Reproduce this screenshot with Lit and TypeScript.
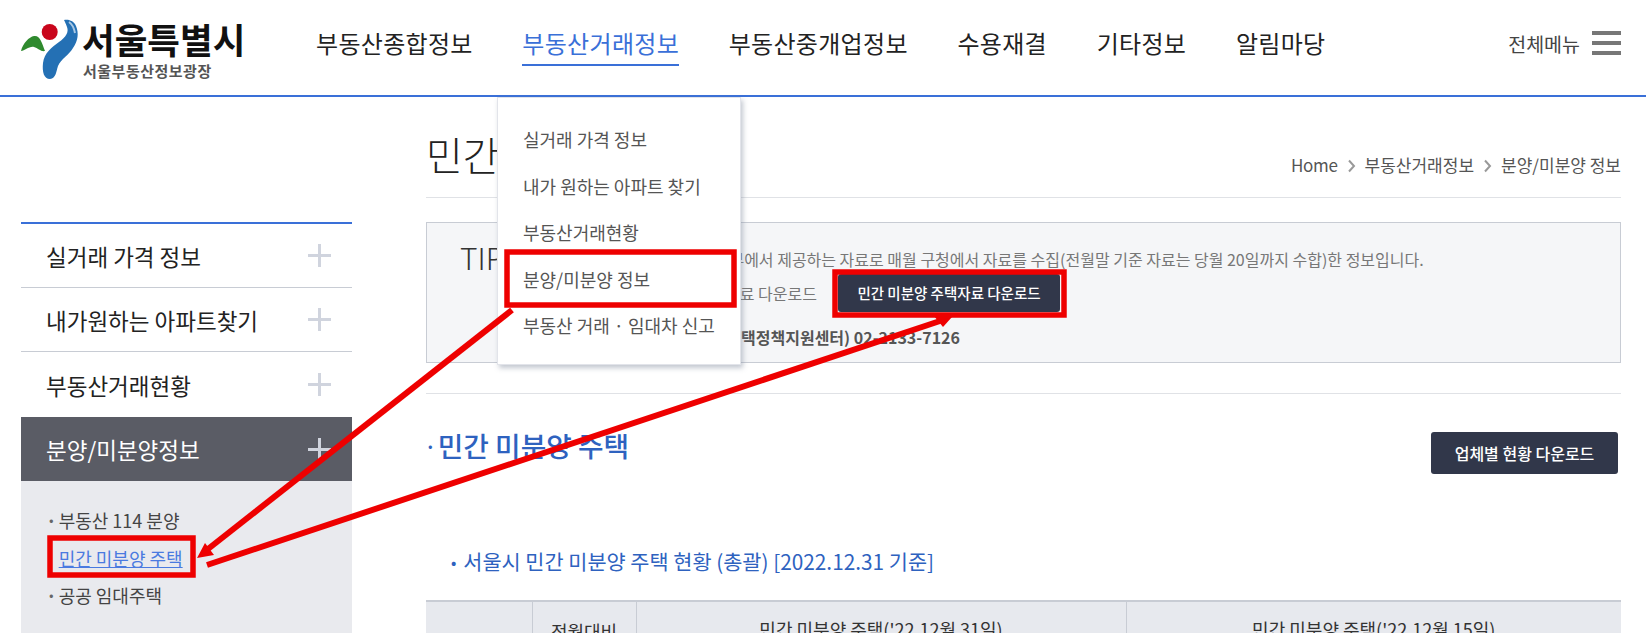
import { LitElement, html, css, svg } from 'lit';
import { customElement } from 'lit/decorators.js';

const NAV = ['부동산종합정보', '부동산거래정보', '부동산중개업정보', '수용재결', '기타정보', '알림마당'];
const DROPDOWN = ['실거래 가격 정보', '내가 원하는 아파트 찾기', '부동산거래현황', '분양/미분양 정보', '부동산 거래 · 임대차 신고'];
const SIDE = ['실거래 가격 정보', '내가원하는 아파트찾기', '부동산거래현황'];

@customElement('app-root')
export class AppRoot extends LitElement {
  static styles = css`
    :host {
      display: block;
      position: relative;
      height: 633px;
      overflow: hidden;
      background: #fff;
      color: #222;
      font-family: 'Noto Sans CJK KR', 'Noto Sans', sans-serif;
    }
    .header {
      display: flex;
      align-items: center;
      height: 95px;
      border-bottom: 2px solid #3a70d8;
      padding: 0 25px 0 19px;
    }
    .logo {
      display: flex;
      width: 297px;
      flex: none;
    }
    .logo svg {
      flex: none;
      margin-top: -2px;
    }
    .logo-text {
      display: flex;
      flex-direction: column;
      margin: 6px 0 0 -1px;
    }
    .logo-main {
      font-size: 35.5px;
      font-weight: 700;
      line-height: 40px;
      color: #111;
    }
    .logo-sub {
      font-size: 15px;
      font-weight: 700;
      line-height: 20px;
      color: #555;
      margin: 2px 0 0 1px;
      letter-spacing: 0.5px;
    }
    .nav {
      display: flex;
      gap: 49.7px;
      flex: 1;
      margin-bottom: 8px;
    }
    .nav a {
      font-size: 24px;
      line-height: 38px;
      letter-spacing: 0.3px;
      color: #222;
      padding-bottom: 2px;
      border-bottom: 2px solid transparent;
      margin-bottom: -2px;
    }
    .nav a.on {
      color: #3a70d8;
      border-bottom-color: #3a70d8;
    }
    .all {
      display: flex;
      align-items: center;
      gap: 12px;
      font-size: 19.5px;
      color: #444;
      margin-bottom: 9px;
    }
    .burger {
      display: flex;
      flex-direction: column;
      gap: 6px;
      width: 29px;
    }
    .burger i {
      display: block;
      height: 4px;
      background: #777;
    }
    .body {
      display: flex;
      gap: 74px;
      padding-left: 21px;
    }
    .side {
      flex: none;
      width: 331px;
      margin-top: 125px;
      border-top: 2px solid #3a70d8;
    }
    .side-row {
      display: flex;
      align-items: center;
      justify-content: space-between;
      height: 63px;
      padding: 0 21px 0 25px;
      border-bottom: 1px solid #c8ccd4;
      font-size: 22.5px;
      color: #222;
    }
    .side-row:nth-child(3) {
      border-bottom: 0;
      height: 65px;
    }
    .side-row.on {
      height: 64px;
      background: #5a5c65;
      color: #fff;
      border-bottom: 0;
    }
    .plus {
      width: 23px;
      height: 23px;
      flex: none;
      background:
        linear-gradient(#d0d4de, #d0d4de) center / 100% 3px no-repeat,
        linear-gradient(#d0d4de, #d0d4de) center / 3px 100% no-repeat;
    }
    .sub {
      background: #e9eaee;
      padding: 21px 25px 40px 25px;
      height: 152px;
      font-size: 18px;
      color: #444;
    }
    .sub div {
      height: 37.5px;
      line-height: 37.5px;
    }
    .sub div::before {
      content: '·';
      font-weight: 700;
      color: #666;
      margin-right: 2px;
    }
    .sub a {
      color: #4a7ae0;
      text-decoration: underline;
    }
    .sub .link::before {
      color: transparent;
    }
    .main {
      flex: 1;
      min-width: 0;
      padding-right: 25px;
    }
    .title-row {
      display: flex;
      align-items: flex-end;
      justify-content: space-between;
      height: 101px;
      border-bottom: 1px solid #e0e2e6;
      box-sizing: border-box;
    }
    .title {
      font-size: 40px;
      font-weight: 300;
      line-height: 58px;
      margin: 0 0 14px 0;
      color: #222;
    }
    .crumbs {
      display: flex;
      align-items: center;
      gap: 9px;
      font-size: 17px;
      line-height: 24px;
      margin-bottom: 20px;
      color: #555;
    }
    .crumbs span:first-child {
      letter-spacing: -0.3px;
    }
    .crumbs svg {
      flex: none;
      margin-top: 2px;
    }
    .tip {
      display: flex;
      box-sizing: border-box;
      margin-top: 24px;
      background: #f5f6f8;
      border: 1px solid #c8ccd4;
      padding: 19px 0 0 33px;
      height: 141px;
    }
    .tip-label {
      font-size: 30px;
      font-weight: 300;
      line-height: 30px;
      color: #333;
      width: 49px;
      flex: none;
    }
    .tip-body {
      flex: 1;
      font-size: 16px;
      color: #777;
      padding-top: 5px;
      white-space: nowrap;
    }
    .tip-line {
      display: flex;
      align-items: center;
      line-height: 24px;
    }
    .tip-line.dl {
      height: 38px;
      margin-top: 3px;
      gap: 21px;
    }
    .tip-line.dl span:first-child {
      flex: none;
      width: 308px;
      text-align: right;
    }
    .tip-line.strong {
      width: 451px;
      justify-content: flex-end;
      font-weight: 700;
      color: #555;
      margin-top: 13px;
    }
    .btn {
      display: flex;
      align-items: center;
      justify-content: center;
      background: #31374a;
      color: #fff;
      border-radius: 3px;
      font-weight: 500;
    }
    .btn.small {
      flex: none;
      width: 222px;
      height: 38px;
      font-size: 14.5px;
    }
    .btn.big {
      width: 187px;
      height: 42px;
      font-size: 16px;
      margin-right: 3px;
    }
    .rule {
      border-top: 1px solid #e0e2e6;
      margin-top: 30px;
    }
    .section {
      display: flex;
      align-items: center;
      justify-content: space-between;
      margin-top: 38px;
      height: 42px;
    }
    .section h2 {
      margin: 0 0 15px -1px;
      font-size: 27.8px;
      font-weight: 500;
      color: #2e62bf;
      line-height: 42px;
    }
    .section h2 b {
      font-size: 18px;
      margin-right: 2px;
      vertical-align: 3px;
    }
    .table-title {
      margin: 72px 0 0 25px;
      font-size: 20.8px;
      line-height: 30px;
      font-weight: 400;
      color: #2e62bf;
    }
    .table-title b {
      font-size: 14px;
      margin-right: 7px;
      vertical-align: 2px;
    }
    table {
      width: 100%;
      margin-top: 23px;
      border-collapse: collapse;
      table-layout: fixed;
      border-top: 2px solid #c8ccd4;
      background: #e7e9ee;
      font-size: 18px;
      color: #333;
    }
    th {
      font-weight: 400;
      border-right: 1px solid #c8ccd4;
      height: 56px;
      line-height: 24px;
      vertical-align: top;
      padding: 15px 0 0;
    }
    th:last-child {
      border-right: 0;
    }
    th.two {
      padding-top: 17px;
    }
    .dropdown {
      position: absolute;
      left: 497px;
      top: 97px;
      width: 244px;
      height: 268px;
      box-sizing: border-box;
      background: #fff;
      border: 1px solid #e2e4ea;
      box-shadow: 2px 3px 5px rgba(120, 130, 150, 0.45);
      padding: 18px 0 0 25px;
      font-size: 18px;
      color: #555;
    }
    .dropdown div {
      height: 46.5px;
      line-height: 46.5px;
      white-space: nowrap;
    }
    .marks {
      position: absolute;
      left: 0;
      top: 0;
      pointer-events: none;
    }
  `;

  private chevron() {
    return html`<svg width="9" height="14" viewBox="0 0 9 14"><path d="M2 1.5 7 7l-5 5.5" fill="none" stroke="#999" stroke-width="2"/></svg>`;
  }

  private logo() {
    return html`<svg width="64" height="72" viewBox="19 10 64 72">
      <circle cx="49.7" cy="31" r="8" fill="#c9061c"/>
      <path d="M21 50c2-8 8-14 13-15 6-1 8 7 11 15-4 1-7-3-11-4-5-1-9 4-13 4z" fill="#2f8a2e"/>
      <path d="M64 19C69 18 74 20 76 25 79 32 78 40 73 47 69 54 61 58 58 65 56 71 56 77 50 78 44 78 42 71 43 62 44 52 52 46 59 41 66 36 69 31 67 26 66 23 65 21 64 19Z" fill="#2470b4"/>
      <path d="M69 21c3 2 5 6 6 11" fill="none" stroke="#a9c8e4" stroke-width="2"/>
    </svg>`;
  }

  private marks() {
    return svg`
      <g fill="none" stroke="#ee0000" stroke-width="5.5">
        <rect x="507" y="252" width="227" height="53"/>
        <rect x="835" y="272" width="229" height="43"/>
        <rect x="50" y="538" width="143" height="37"/>
      </g>
      <g fill="none" stroke="#ee0000" stroke-width="6">
        <line x1="512" y1="310" x2="208" y2="549"/>
        <line x1="207" y1="565" x2="940" y2="321"/>
      </g>
      <polygon points="197,558 205,543 214,555" fill="#ee0000"/>
      <polygon points="952,317 934,316 943,327" fill="#ee0000"/>
    `;
  }

  render() {
    return html`
      <div class="header">
        <div class="logo">
          ${this.logo()}
          <div class="logo-text">
            <span class="logo-main">서울특별시</span>
            <span class="logo-sub">서울부동산정보광장</span>
          </div>
        </div>
        <div class="nav">
          ${NAV.map((n, i) => html`<a class=${i === 1 ? 'on' : ''}>${n}</a>`)}
        </div>
        <div class="all">
          <span>전체메뉴</span>
          <div class="burger"><i></i><i></i><i></i></div>
        </div>
      </div>
      <div class="body">
        <div class="side">
          ${SIDE.map((s) => html`<div class="side-row"><span>${s}</span><span class="plus"></span></div>`)}
          <div class="side-row on"><span>분양/미분양정보</span><span class="plus"></span></div>
          <div class="sub">
            <div>부동산 114 분양</div>
            <div class="link"><a>민간 미분양 주택</a></div>
            <div>공공 임대주택</div>
          </div>
        </div>
        <div class="main">
          <div class="title-row">
            <div class="title">민간 미분양 주택</div>
            <div class="crumbs">
              <span>Home</span>${this.chevron()}<span>부동산거래정보</span>${this.chevron()}<span>분양/미분양 정보</span>
            </div>
          </div>
          <div class="tip">
            <div class="tip-label">TIP</div>
            <div class="tip-body">
              <div class="tip-line">민간 미분양 주택 현황은 국토교통부에서 제공하는 자료로 매월 구청에서 자료를 수집(전월말 기준 자료는 당월 20일까지 수합)한 정보입니다.</div>
              <div class="tip-line dl">
                <span>민간 미분양 주택 현황 자료 다운로드</span>
                <span class="btn small">민간 미분양 주택자료 다운로드</span>
              </div>
              <div class="tip-line strong">문의처 : 서울시 (주택정책지원센터) 02-2133-7126</div>
            </div>
          </div>
          <div class="rule"></div>
          <div class="section">
            <h2><b>·</b>민간 미분양 주택</h2>
            <span class="btn big">업체별 현황 다운로드</span>
          </div>
          <div class="table-title"><b>•</b>서울시 민간 미분양 주택 현황 (총괄) [2022.12.31 기준]</div>
          <table>
            <colgroup>
              <col style="width:106px" /><col style="width:104px" /><col style="width:490px" /><col />
            </colgroup>
            <tr>
              <th></th>
              <th class="two">전월대비</th>
              <th>민간 미분양 주택('22.12월 31일)</th>
              <th>민간 미분양 주택('22.12월 15일)</th>
            </tr>
          </table>
        </div>
      </div>
      <div class="dropdown">
        ${DROPDOWN.map((d) => html`<div>${d}</div>`)}
      </div>
      <svg class="marks" width="1646" height="633" viewBox="0 0 1646 633">${this.marks()}</svg>
    `;
  }
}
